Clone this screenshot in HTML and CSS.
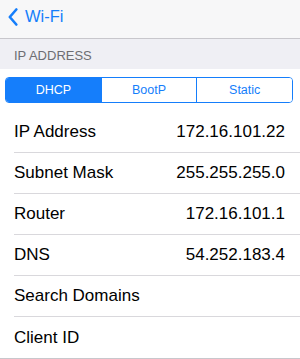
FILE: index.html
```html
<!DOCTYPE html>
<html lang="en">
<head>
    <meta charset="UTF-8">
    <meta name="viewport" content="width=device-width, initial-scale=1.0">
    <title>Wi-Fi IP Address</title>
    <link rel="stylesheet" href="styles.css">
</head>
<body>
    <div class="navbar">
        <a class="back" href="#">
            <svg class="chevron" width="10" height="18" viewBox="0 0 10 18">
                <path d="M8.3 1.5 L1.8 9 L8.3 16.5" fill="none" stroke="#157efb" stroke-width="2.6" stroke-linecap="round" stroke-linejoin="round"/>
            </svg>
            <span>Wi-Fi</span>
        </a>
    </div>

    <div class="section-header">IP ADDRESS</div>

    <div class="segment-wrap">
        <div class="segmented">
            <button class="active">DHCP</button>
            <button>BootP</button>
            <button>Static</button>
        </div>
    </div>

    <ul class="table">
        <li><span class="label">IP Address</span><span class="value">172.16.101.22</span></li>
        <li><span class="label">Subnet Mask</span><span class="value">255.255.255.0</span></li>
        <li><span class="label">Router</span><span class="value">172.16.101.1</span></li>
        <li><span class="label">DNS</span><span class="value">54.252.183.4</span></li>
        <li><span class="label">Search Domains</span><span class="value"></span></li>
        <li><span class="label">Client ID</span><span class="value"></span></li>
    </ul>
</body>
</html>
```

FILE: styles.css
```css
body {
    margin: 0;
    font-family: "Liberation Sans", Arial, sans-serif;
    background: #ffffff;
    color: #000;
}
.navbar {
    height: 39px;
    background: #f7f7f8;
    border-bottom: 1px solid #c8c7cc;
    display: flex;
    align-items: center;
    box-sizing: border-box;
}
.back {
    display: flex;
    align-items: center;
    gap: 7px;
    padding-left: 8px;
    color: #157efb;
    text-decoration: none;
    font-size: 16.5px;
    margin-top: -5px;
}
.section-header {
    height: 30px;
    background: #efeff4;
    color: #6d6d72;
    font-size: 13px;
    padding-left: 14px;
    display: flex;
    align-items: center;
    box-sizing: border-box;
    padding-top: 2px;
}
.segment-wrap {
    padding: 8px 7px 9px 5px;
}
.segmented {
    display: flex;
    height: 26px;
    border: 1px solid #157efb;
    border-radius: 4px;
    overflow: hidden;
    box-sizing: border-box;
}
.segmented button {
    flex: 1;
    border: none;
    border-left: 1px solid #157efb;
    background: #fff;
    color: #157efb;
    font-family: "Liberation Sans", Arial, sans-serif;
    font-size: 12.5px;
    padding: 0;
    cursor: pointer;
}
.segmented button:first-child {
    border-left: none;
}
.segmented button.active {
    background: #157efb;
    color: #fff;
}
.table {
    list-style: none;
    margin: 0;
    padding: 0 0 0 14px;
    border-bottom: 1px solid #c8c7cc;
}
.table li {
    height: 41px;
    display: flex;
    align-items: center;
    justify-content: space-between;
    padding-right: 15px;
    border-bottom: 1px solid #d9d8dc;
    box-sizing: border-box;
    font-size: 17px;
}
.table li:last-child {
    border-bottom: none;
}
```
